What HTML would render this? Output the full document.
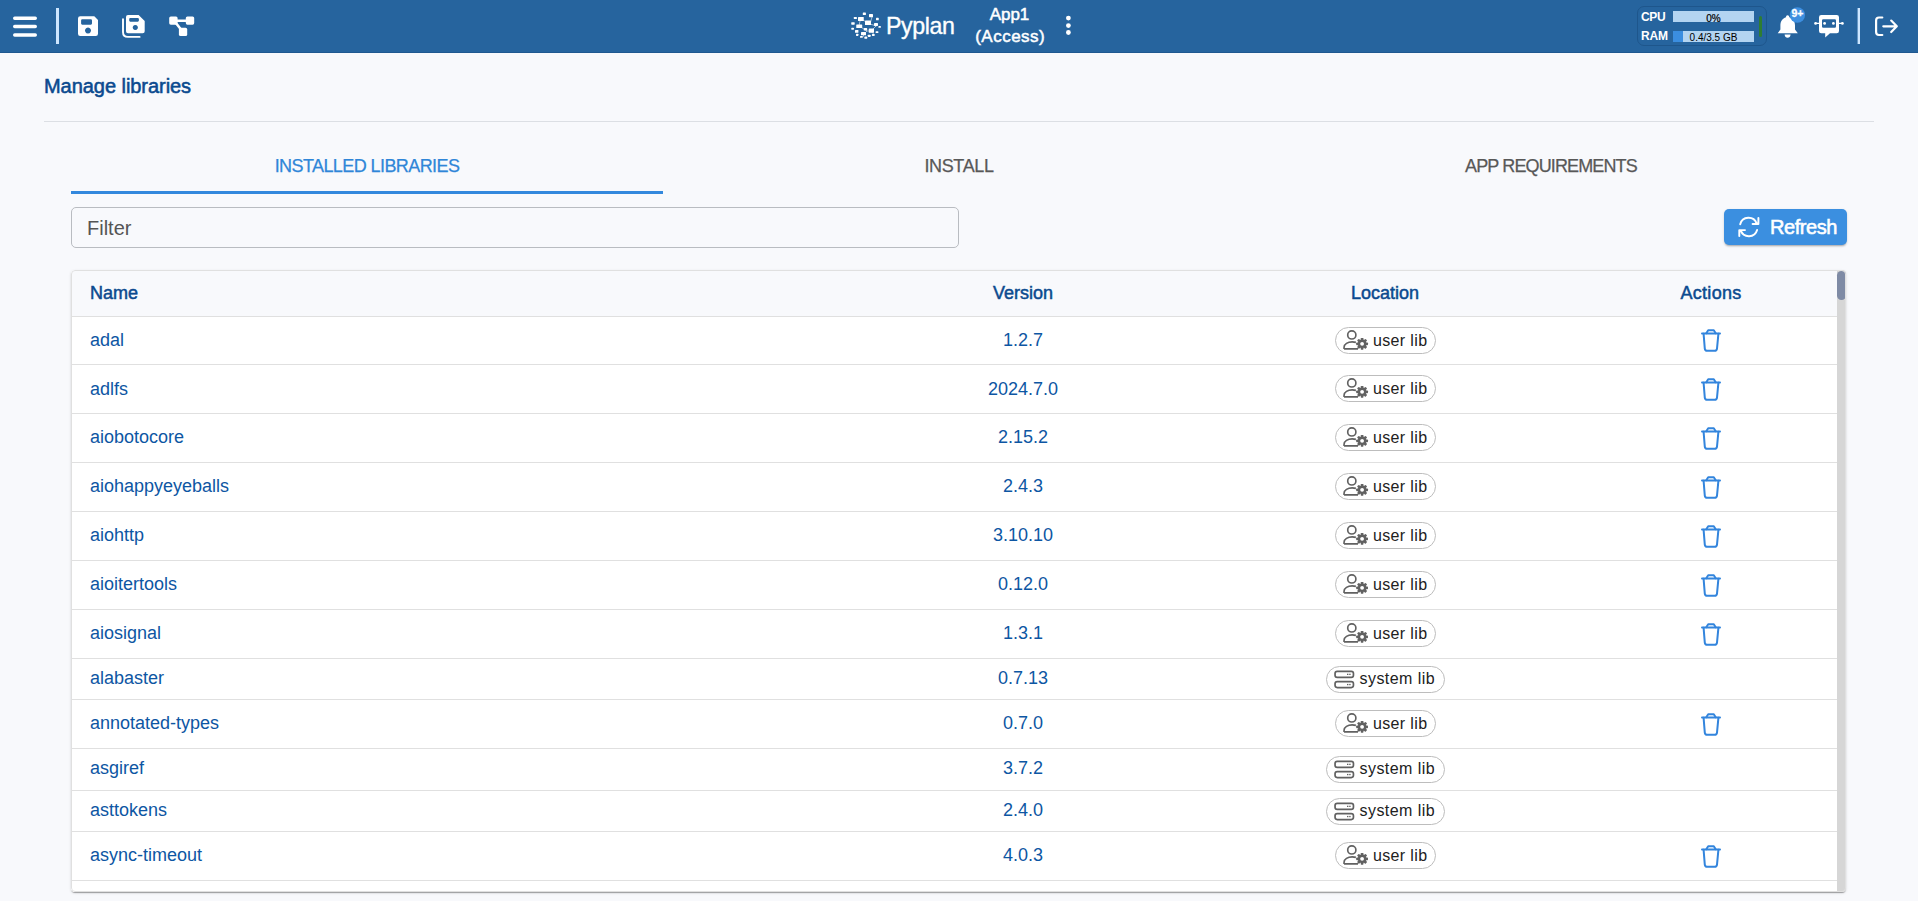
<!DOCTYPE html>
<html><head><meta charset="utf-8"><title>Pyplan - Manage libraries</title>
<style>
*{box-sizing:border-box;margin:0;padding:0}
html,body{width:1918px;height:901px;overflow:hidden;background:#f8f9fc;font-family:"Liberation Sans",sans-serif;position:relative}
.abs{position:absolute}
#hdr{position:absolute;left:0;top:0;width:1918px;height:53px;background:#26649e;border-bottom:1px solid #1f5890}
.wt{color:#fff}
.title{position:absolute;left:44px;top:74px;font-size:20px;font-weight:normal;-webkit-text-stroke:0.55px #0b4a8f;color:#0b4a8f;letter-spacing:-0.05px;line-height:24px;white-space:nowrap}
.divider{position:absolute;left:44px;top:121px;width:1830px;height:1px;background:#dcdfe4}
.tab{position:absolute;top:154px;height:24px;line-height:24px;font-size:18px;-webkit-text-stroke:0.25px currentColor;text-align:center;white-space:nowrap;color:#585858}
.tab.act{color:#2f86d8}
.ink{position:absolute;left:71px;top:191px;width:592px;height:3px;background:#3388dd}
.filter{position:absolute;left:71px;top:207px;width:888px;height:41px;border:1px solid #b9bcc1;border-radius:5px;background:#f8f9fc}
.filter span{position:absolute;left:15px;top:8px;font-size:20px;line-height:24px;color:#555}
.btn{position:absolute;left:1724px;top:209px;width:123px;height:36px;background:#3b8fe0;border-radius:5px;box-shadow:0 2px 2px -1px rgba(0,0,0,.25),0 1px 3px rgba(0,0,0,.12)}
.btn .bt{position:absolute;left:46px;top:6px;font-size:20px;font-weight:normal;-webkit-text-stroke:0.55px #fff;line-height:24px;color:#fff;letter-spacing:-0.45px}
.paper{position:absolute;left:71px;top:270px;width:1775px;height:622px;background:#fff;border-radius:4px;overflow:hidden;box-shadow:0 2px 1px -1px rgba(0,0,0,.2),0 1px 1px 0 rgba(0,0,0,.14),0 1px 3px 0 rgba(0,0,0,.12)}
.thead{position:absolute;left:0;top:0;width:1766px;height:47px;background:#f8f9fc;border-bottom:1px solid #e0e0e0}
.th{position:absolute;top:0;height:46px;line-height:46px;font-size:18px;font-weight:normal;-webkit-text-stroke:0.5px #0b4a8f;color:#0b4a8f;white-space:nowrap}
.row{position:absolute;left:0;width:1766px;background:#fff;border-bottom:1px solid #e0e0e0;box-sizing:content-box}
.nm{position:absolute;left:19px;top:0;font-size:18px;color:#0d56a3;white-space:nowrap}
.ver{position:absolute;left:852px;width:200px;top:0;text-align:center;font-size:18px;color:#0d56a3;white-space:nowrap}
.chip{position:absolute;height:27px;border:1px solid #bdbdbd;border-radius:14px;background:#fff;line-height:24px;white-space:nowrap}
.chip .ic{position:absolute;left:7px;top:1.2px}
.chip.sys .ic{left:7px;top:3.2px}
.ct{position:absolute;left:37px;top:2px;font-size:16px;color:#212121;line-height:22px;letter-spacing:0.35px}
.chip.sys .ct{left:32.5px;top:1.3px;letter-spacing:0.45px}
.trash{position:absolute;left:1629px;width:22px;height:24px;line-height:0}
.sb{position:absolute;left:1766px;top:0;width:9px;height:622px;background:#d6d6d6}
.pb{position:absolute;left:0;top:0;right:0;bottom:0;border:1px solid #e0e0e0;border-radius:4px}
.thumb{position:absolute;left:0;top:1px;width:9px;height:29px;border-radius:5px;background:#7f8ba5}
</style></head><body>
<div id="hdr">
  <svg class="abs" style="left:0;top:0" width="220" height="53" viewBox="0 0 220 53">
    <g stroke="#fff" stroke-width="3.4" stroke-linecap="round"><path d="M14.7 18.2H35.3M14.7 26.5H35.3M14.7 35H35.3"/></g>
    <rect x="56" y="8" width="3" height="36" fill="#cde6ff"/>
    <path fill="#fff" fill-rule="evenodd" d="M80 16.3H94.3L98 20V33.8Q98 36 95.8 36H80.2Q78 36 78 33.8V18.5Q78 16.3 80.2 16.3Z M82.2 19.3H90.9Q92 19.3 92 20.4V23.6Q92 24.7 90.9 24.7H82.2Q81.1 24.7 81.1 23.6V20.4Q81.1 19.3 82.2 19.3Z M88 27.5A3 3 0 1 0 88.001 27.5Z"/>
    <path fill="#fff" fill-rule="evenodd" d="M128 15H138.6L144.7 21V31.3Q144.7 33.3 142.7 33.3H128Q126 33.3 126 31.3V17Q126 15 128 15Z M130.3 18H137.8Q138.9 18 138.9 19.1V20.6Q138.9 21.7 137.8 21.7H130.3Q129.2 21.7 129.2 20.6V19.1Q129.2 18 130.3 18Z M135.3 24.9A2.6 2.6 0 1 0 135.301 24.9Z"/>
    <path fill="none" stroke="#fff" stroke-width="1.9" stroke-linecap="round" d="M123 19.2V32Q123 36.9 127.9 36.9H139.6"/>
    <g fill="#fff"><rect x="169.2" y="16.4" width="8.4" height="8.3" rx="1.6"/><rect x="185.8" y="16.4" width="8.4" height="8.3" rx="1.6"/><rect x="178.9" y="27.8" width="8.3" height="8.3" rx="1.6"/></g>
    <g stroke="#fff" stroke-width="2.6" fill="none"><path d="M176 20.8H187M175.5 22.5L181 29.5"/></g>
  </svg>
  <svg class="abs" style="left:850px;top:11px" width="32" height="29" viewBox="0 0 32 29"><g fill="#fff"><rect x="12.80" y="1.50" width="3.10" height="2.50" rx="0.6"/><rect x="19.00" y="3.00" width="4.00" height="3.20" rx="0.6"/><rect x="3.80" y="5.90" width="3.10" height="2.10" rx="0.6"/><rect x="8.00" y="5.90" width="5.75" height="4.10" rx="0.6"/><rect x="26.00" y="6.80" width="2.75" height="2.50" rx="0.6"/><rect x="15.00" y="9.60" width="6.00" height="4.40" rx="0.6"/><rect x="1.25" y="11.20" width="3.45" height="2.50" rx="0.6"/><rect x="24.00" y="12.10" width="4.00" height="2.80" rx="0.6"/><rect x="6.25" y="13.40" width="5.95" height="3.70" rx="0.6"/><rect x="28.40" y="14.90" width="2.50" height="1.90" rx="0.6"/><rect x="1.25" y="16.80" width="2.75" height="1.90" rx="0.6"/><rect x="13.75" y="17.10" width="3.45" height="2.50" rx="0.6"/><rect x="18.75" y="17.40" width="5.25" height="4.40" rx="0.6"/><rect x="5.00" y="19.00" width="3.40" height="2.80" rx="0.6"/><rect x="25.60" y="20.25" width="2.80" height="1.85" rx="0.6"/><rect x="11.00" y="20.90" width="5.00" height="3.40" rx="0.6"/><rect x="6.00" y="22.75" width="2.40" height="2.15" rx="0.6"/><rect x="17.80" y="23.70" width="2.80" height="2.20" rx="0.6"/><rect x="21.90" y="23.00" width="2.80" height="1.90" rx="0.6"/><rect x="10.00" y="24.90" width="2.80" height="1.90" rx="0.6"/><rect x="14.40" y="25.60" width="2.80" height="2.15" rx="0.6"/></g><path d="M11 8 L20 13 M22 6 L20 13 L26.5 15 M10 10 L9 15 M9 15 L17 20 L21 20 M17 20 L14 23 L13 26 M21 20 L26 15 M21 20 L24 23.5" stroke="#fff" stroke-width="0.7" fill="none" opacity="0.8"/></svg>
  <div class="abs wt" style="left:886px;top:12px;font-size:23.2px;line-height:28px;letter-spacing:-0.4px;-webkit-text-stroke:0.35px #fff">Pyplan</div>
  <div class="abs wt" style="left:966px;top:3.8px;width:88px;text-align:center;font-size:17px;line-height:22px;font-weight:normal;-webkit-text-stroke:0.5px #fff"><span style="letter-spacing:-0.1px;position:relative;left:-0.5px">App1</span><br><span style="letter-spacing:0.5px;position:relative;left:0.2px">(Access)</span></div>
  <svg class="abs" style="left:1060px;top:12px" width="16" height="28" viewBox="0 0 16 28"><g fill="#fff"><circle cx="8.4" cy="6.1" r="2.4"/><circle cx="8.4" cy="13.6" r="2.4"/><circle cx="8.4" cy="20.5" r="2.4"/></g></svg>
  <div class="abs" style="left:1637px;top:6px;width:130px;height:40px;border:1px solid #1e568c;border-radius:7px"></div>
  <div class="abs wt" style="left:1641px;top:10px;font-size:12px;line-height:14px;font-weight:bold;letter-spacing:-0.3px">CPU</div>
  <div class="abs wt" style="left:1641px;top:29.3px;font-size:12px;line-height:14px;font-weight:bold;letter-spacing:-0.15px">RAM</div>
  <div class="abs" style="left:1673px;top:11px;width:81px;height:11px;background:#b3d4f1;font-size:10px;line-height:15px;text-align:center;color:#000;-webkit-text-stroke:0.2px #000">0%</div>
  <div class="abs" style="left:1673px;top:31px;width:81px;height:11px;background:#b3d4f1"></div>
  <div class="abs" style="left:1673px;top:31px;width:10px;height:11px;background:#3b8ee0"></div>
  <div class="abs" style="left:1673px;top:31px;width:81px;height:11px;font-size:10px;line-height:13px;text-align:center;color:#000">0.4/3.5 GB</div>
  <div class="abs" style="left:1759px;top:16px;width:3px;height:20.5px;border-radius:1.5px;background:#2e7d32"></div>
  <svg class="abs" style="left:1770px;top:0" width="148" height="53" viewBox="1770 0 148 53">
    <path fill="#fff" d="M1787.5 15.3C1788.6 15.3 1789.3 16.2 1789.3 17.2C1793 18.2 1795 21.4 1795 25.3V29.6L1797.8 33.2H1777.7L1780.4 29.6V25.3C1780.4 21.4 1782.5 18.2 1786 17.2C1786 16.2 1786.6 15.3 1787.5 15.3Z M1784.6 34.6H1790.6Q1790.2 37.8 1787.6 37.8Q1785 37.8 1784.6 34.6Z"/>
    <circle cx="1797.4" cy="15" r="7.7" fill="#3d8fe0"/>
    
    <path fill="#fff" fill-rule="evenodd" d="M1821.3 15H1836.7Q1839 15 1839 17.3V30.9Q1839 33.2 1836.7 33.2H1830L1825.2 37.6V33.2H1821.3Q1819 33.2 1819 30.9V17.3Q1819 15 1821.3 15Z M1823.2 19.3H1834.8Q1836 19.3 1836 20.5V26.6Q1836 27.8 1834.8 27.8H1823.2Q1822 27.8 1822 26.6V20.5Q1822 19.3 1823.2 19.3Z"/>
    <g fill="#fff"><circle cx="1824.6" cy="23.4" r="1.4"/><circle cx="1833.4" cy="23.4" r="1.4"/></g>
    <g stroke="#fff" stroke-width="1.4"><path d="M1815.3 23.4H1819M1839 23.4H1842.7"/></g>
    <g fill="#fff"><circle cx="1815.6" cy="23.4" r="1.4"/><circle cx="1842.4" cy="23.4" r="1.4"/></g>
    <rect x="1857.6" y="8" width="2.4" height="36" fill="#cde6ff"/>
    <path fill="none" stroke="#fff" stroke-width="2.2" stroke-linecap="round" stroke-linejoin="round" d="M1882.3 17.5H1879Q1876.1 17.5 1876.1 20.4V32Q1876.1 35 1879 35H1882.3 M1883.3 26.3H1896.4 M1891.2 20.6L1896.8 26.3L1891.2 32"/>
  </svg>
  <div class="abs wt" style="left:1786.3px;top:6.8px;width:22px;text-align:center;font-size:10.5px;line-height:12px;font-weight:bold;letter-spacing:-0.2px;-webkit-text-stroke:0.3px #fff">9+</div>
</div>

<div class="title">Manage libraries</div>
<div class="divider"></div>
<div class="tab act" style="left:71px;width:592px;letter-spacing:-0.58px">INSTALLED LIBRARIES</div>
<div class="tab" style="left:663px;width:592px;letter-spacing:-0.35px">INSTALL</div>
<div class="tab" style="left:1255px;width:592px;letter-spacing:-0.87px">APP REQUIREMENTS</div>
<div class="ink"></div>
<div class="filter"><span>Filter</span></div>
<div class="btn">
  <svg class="abs" style="left:13.2px;top:7.3px" width="24" height="22" viewBox="0 0 24 22"><g fill="none" stroke="#fff" stroke-width="1.95" stroke-linecap="round" stroke-linejoin="round"><path d="M3.2 8.2A8.6 8.6 0 0 1 19.6 7.4M21.4 2V7.9H15.6"/><path d="M20.1 14A8.6 8.6 0 0 1 3.8 14.7M2.3 20V14.1H8"/></g></svg>
  <div class="bt">Refresh</div>
</div>

<div class="paper">
  <div class="thead">
    <div class="th" style="left:19px">Name</div>
    <div class="th" style="left:852px;width:200px;text-align:center;letter-spacing:0px">Version</div>
    <div class="th" style="left:1214px;width:200px;text-align:center;letter-spacing:0px">Location</div>
    <div class="th" style="left:1540px;width:200px;text-align:center;letter-spacing:0.3px">Actions</div>
  </div>
  <div style="position:absolute;left:0;top:-270px;width:1766px;height:901px">
<div class="row" style="top:317px;height:47px;line-height:47px"><div class="nm">adal</div><div class="ver">1.2.7</div><div class="chip" style="left:1264px;width:101px;top:10px"><svg class="ic" width="26" height="22" viewBox="0 0 26 22"><g fill="none" stroke="#616161" stroke-width="1.65"><circle cx="8.8" cy="5.9" r="4.1"/><path d="M1.05 19.9 V18.3 C1.05 15.1 4.8 12.9 9.2 12.9 C10.6 12.9 11.9 13.1 12.9 13.4 M1.05 19.9 H15"/></g><g transform="translate(19.1 14.8)" fill="#616161"><circle r="4.3"/><rect x="-1.35" y="-5.9" width="2.7" height="11.8" rx="0.7"/><rect x="-1.35" y="-5.9" width="2.7" height="11.8" rx="0.7" transform="rotate(45)"/><rect x="-1.35" y="-5.9" width="2.7" height="11.8" rx="0.7" transform="rotate(90)"/><rect x="-1.35" y="-5.9" width="2.7" height="11.8" rx="0.7" transform="rotate(135)"/><circle r="1.9" fill="#fff"/></g></svg><span class="ct">user lib</span></div><div class="trash" style="top:11.00px"><svg width="22" height="24" viewBox="0 0 22 24"><g fill="none" stroke="#3385dd" stroke-width="2" stroke-linecap="round" stroke-linejoin="round"><path d="M2 5.6 H20"/><path d="M3.6 5.8 L4.8 20.6 Q5 22.8 7.2 22.8 H14.6 Q16.8 22.8 17 20.6 L18.4 5.8"/><path d="M6.3 5.2 L8.2 2.2 H13.8 L15.7 5.2"/></g></svg></div></div>
<div class="row" style="top:365px;height:48px;line-height:48px"><div class="nm">adlfs</div><div class="ver">2024.7.0</div><div class="chip" style="left:1264px;width:101px;top:10px"><svg class="ic" width="26" height="22" viewBox="0 0 26 22"><g fill="none" stroke="#616161" stroke-width="1.65"><circle cx="8.8" cy="5.9" r="4.1"/><path d="M1.05 19.9 V18.3 C1.05 15.1 4.8 12.9 9.2 12.9 C10.6 12.9 11.9 13.1 12.9 13.4 M1.05 19.9 H15"/></g><g transform="translate(19.1 14.8)" fill="#616161"><circle r="4.3"/><rect x="-1.35" y="-5.9" width="2.7" height="11.8" rx="0.7"/><rect x="-1.35" y="-5.9" width="2.7" height="11.8" rx="0.7" transform="rotate(45)"/><rect x="-1.35" y="-5.9" width="2.7" height="11.8" rx="0.7" transform="rotate(90)"/><rect x="-1.35" y="-5.9" width="2.7" height="11.8" rx="0.7" transform="rotate(135)"/><circle r="1.9" fill="#fff"/></g></svg><span class="ct">user lib</span></div><div class="trash" style="top:11.50px"><svg width="22" height="24" viewBox="0 0 22 24"><g fill="none" stroke="#3385dd" stroke-width="2" stroke-linecap="round" stroke-linejoin="round"><path d="M2 5.6 H20"/><path d="M3.6 5.8 L4.8 20.6 Q5 22.8 7.2 22.8 H14.6 Q16.8 22.8 17 20.6 L18.4 5.8"/><path d="M6.3 5.2 L8.2 2.2 H13.8 L15.7 5.2"/></g></svg></div></div>
<div class="row" style="top:414px;height:48px;line-height:48px"><div class="nm" style="top:-1px">aiobotocore</div><div class="ver" style="top:-1px">2.15.2</div><div class="chip" style="left:1264px;width:101px;top:10px"><svg class="ic" width="26" height="22" viewBox="0 0 26 22"><g fill="none" stroke="#616161" stroke-width="1.65"><circle cx="8.8" cy="5.9" r="4.1"/><path d="M1.05 19.9 V18.3 C1.05 15.1 4.8 12.9 9.2 12.9 C10.6 12.9 11.9 13.1 12.9 13.4 M1.05 19.9 H15"/></g><g transform="translate(19.1 14.8)" fill="#616161"><circle r="4.3"/><rect x="-1.35" y="-5.9" width="2.7" height="11.8" rx="0.7"/><rect x="-1.35" y="-5.9" width="2.7" height="11.8" rx="0.7" transform="rotate(45)"/><rect x="-1.35" y="-5.9" width="2.7" height="11.8" rx="0.7" transform="rotate(90)"/><rect x="-1.35" y="-5.9" width="2.7" height="11.8" rx="0.7" transform="rotate(135)"/><circle r="1.9" fill="#fff"/></g></svg><span class="ct">user lib</span></div><div class="trash" style="top:11.50px"><svg width="22" height="24" viewBox="0 0 22 24"><g fill="none" stroke="#3385dd" stroke-width="2" stroke-linecap="round" stroke-linejoin="round"><path d="M2 5.6 H20"/><path d="M3.6 5.8 L4.8 20.6 Q5 22.8 7.2 22.8 H14.6 Q16.8 22.8 17 20.6 L18.4 5.8"/><path d="M6.3 5.2 L8.2 2.2 H13.8 L15.7 5.2"/></g></svg></div></div>
<div class="row" style="top:463px;height:48px;line-height:48px"><div class="nm" style="top:-1px">aiohappyeyeballs</div><div class="ver" style="top:-1px">2.4.3</div><div class="chip" style="left:1264px;width:101px;top:10px"><svg class="ic" width="26" height="22" viewBox="0 0 26 22"><g fill="none" stroke="#616161" stroke-width="1.65"><circle cx="8.8" cy="5.9" r="4.1"/><path d="M1.05 19.9 V18.3 C1.05 15.1 4.8 12.9 9.2 12.9 C10.6 12.9 11.9 13.1 12.9 13.4 M1.05 19.9 H15"/></g><g transform="translate(19.1 14.8)" fill="#616161"><circle r="4.3"/><rect x="-1.35" y="-5.9" width="2.7" height="11.8" rx="0.7"/><rect x="-1.35" y="-5.9" width="2.7" height="11.8" rx="0.7" transform="rotate(45)"/><rect x="-1.35" y="-5.9" width="2.7" height="11.8" rx="0.7" transform="rotate(90)"/><rect x="-1.35" y="-5.9" width="2.7" height="11.8" rx="0.7" transform="rotate(135)"/><circle r="1.9" fill="#fff"/></g></svg><span class="ct">user lib</span></div><div class="trash" style="top:11.50px"><svg width="22" height="24" viewBox="0 0 22 24"><g fill="none" stroke="#3385dd" stroke-width="2" stroke-linecap="round" stroke-linejoin="round"><path d="M2 5.6 H20"/><path d="M3.6 5.8 L4.8 20.6 Q5 22.8 7.2 22.8 H14.6 Q16.8 22.8 17 20.6 L18.4 5.8"/><path d="M6.3 5.2 L8.2 2.2 H13.8 L15.7 5.2"/></g></svg></div></div>
<div class="row" style="top:512px;height:48px;line-height:48px"><div class="nm" style="top:-1px">aiohttp</div><div class="ver" style="top:-1px">3.10.10</div><div class="chip" style="left:1264px;width:101px;top:10px"><svg class="ic" width="26" height="22" viewBox="0 0 26 22"><g fill="none" stroke="#616161" stroke-width="1.65"><circle cx="8.8" cy="5.9" r="4.1"/><path d="M1.05 19.9 V18.3 C1.05 15.1 4.8 12.9 9.2 12.9 C10.6 12.9 11.9 13.1 12.9 13.4 M1.05 19.9 H15"/></g><g transform="translate(19.1 14.8)" fill="#616161"><circle r="4.3"/><rect x="-1.35" y="-5.9" width="2.7" height="11.8" rx="0.7"/><rect x="-1.35" y="-5.9" width="2.7" height="11.8" rx="0.7" transform="rotate(45)"/><rect x="-1.35" y="-5.9" width="2.7" height="11.8" rx="0.7" transform="rotate(90)"/><rect x="-1.35" y="-5.9" width="2.7" height="11.8" rx="0.7" transform="rotate(135)"/><circle r="1.9" fill="#fff"/></g></svg><span class="ct">user lib</span></div><div class="trash" style="top:11.50px"><svg width="22" height="24" viewBox="0 0 22 24"><g fill="none" stroke="#3385dd" stroke-width="2" stroke-linecap="round" stroke-linejoin="round"><path d="M2 5.6 H20"/><path d="M3.6 5.8 L4.8 20.6 Q5 22.8 7.2 22.8 H14.6 Q16.8 22.8 17 20.6 L18.4 5.8"/><path d="M6.3 5.2 L8.2 2.2 H13.8 L15.7 5.2"/></g></svg></div></div>
<div class="row" style="top:561px;height:48px;line-height:48px"><div class="nm" style="top:-1px">aioitertools</div><div class="ver" style="top:-1px">0.12.0</div><div class="chip" style="left:1264px;width:101px;top:10px"><svg class="ic" width="26" height="22" viewBox="0 0 26 22"><g fill="none" stroke="#616161" stroke-width="1.65"><circle cx="8.8" cy="5.9" r="4.1"/><path d="M1.05 19.9 V18.3 C1.05 15.1 4.8 12.9 9.2 12.9 C10.6 12.9 11.9 13.1 12.9 13.4 M1.05 19.9 H15"/></g><g transform="translate(19.1 14.8)" fill="#616161"><circle r="4.3"/><rect x="-1.35" y="-5.9" width="2.7" height="11.8" rx="0.7"/><rect x="-1.35" y="-5.9" width="2.7" height="11.8" rx="0.7" transform="rotate(45)"/><rect x="-1.35" y="-5.9" width="2.7" height="11.8" rx="0.7" transform="rotate(90)"/><rect x="-1.35" y="-5.9" width="2.7" height="11.8" rx="0.7" transform="rotate(135)"/><circle r="1.9" fill="#fff"/></g></svg><span class="ct">user lib</span></div><div class="trash" style="top:11.50px"><svg width="22" height="24" viewBox="0 0 22 24"><g fill="none" stroke="#3385dd" stroke-width="2" stroke-linecap="round" stroke-linejoin="round"><path d="M2 5.6 H20"/><path d="M3.6 5.8 L4.8 20.6 Q5 22.8 7.2 22.8 H14.6 Q16.8 22.8 17 20.6 L18.4 5.8"/><path d="M6.3 5.2 L8.2 2.2 H13.8 L15.7 5.2"/></g></svg></div></div>
<div class="row" style="top:610px;height:48px;line-height:48px"><div class="nm" style="top:-1px">aiosignal</div><div class="ver" style="top:-1px">1.3.1</div><div class="chip" style="left:1264px;width:101px;top:10px"><svg class="ic" width="26" height="22" viewBox="0 0 26 22"><g fill="none" stroke="#616161" stroke-width="1.65"><circle cx="8.8" cy="5.9" r="4.1"/><path d="M1.05 19.9 V18.3 C1.05 15.1 4.8 12.9 9.2 12.9 C10.6 12.9 11.9 13.1 12.9 13.4 M1.05 19.9 H15"/></g><g transform="translate(19.1 14.8)" fill="#616161"><circle r="4.3"/><rect x="-1.35" y="-5.9" width="2.7" height="11.8" rx="0.7"/><rect x="-1.35" y="-5.9" width="2.7" height="11.8" rx="0.7" transform="rotate(45)"/><rect x="-1.35" y="-5.9" width="2.7" height="11.8" rx="0.7" transform="rotate(90)"/><rect x="-1.35" y="-5.9" width="2.7" height="11.8" rx="0.7" transform="rotate(135)"/><circle r="1.9" fill="#fff"/></g></svg><span class="ct">user lib</span></div><div class="trash" style="top:11.50px"><svg width="22" height="24" viewBox="0 0 22 24"><g fill="none" stroke="#3385dd" stroke-width="2" stroke-linecap="round" stroke-linejoin="round"><path d="M2 5.6 H20"/><path d="M3.6 5.8 L4.8 20.6 Q5 22.8 7.2 22.8 H14.6 Q16.8 22.8 17 20.6 L18.4 5.8"/><path d="M6.3 5.2 L8.2 2.2 H13.8 L15.7 5.2"/></g></svg></div></div>
<div class="row" style="top:659px;height:40px;line-height:40px"><div class="nm" style="top:-1px">alabaster</div><div class="ver" style="top:-1px">0.7.13</div><div class="chip sys" style="left:1255px;width:119px;top:7px"><svg class="ic" width="22" height="20" viewBox="0 0 22 20"><g fill="none" stroke="#616161" stroke-width="1.7"><rect x="1.05" y="1.35" width="18.4" height="6" rx="2.2"/><rect x="1.05" y="11.55" width="18.4" height="6" rx="2.2"/></g><g fill="#616161"><rect x="13" y="3.7" width="1.4" height="1.3"/><rect x="15.2" y="3.7" width="1.4" height="1.3"/><rect x="13" y="13.9" width="1.4" height="1.3"/><rect x="15.2" y="13.9" width="1.4" height="1.3"/></g></svg><span class="ct">system lib</span></div></div>
<div class="row" style="top:700px;height:48px;line-height:48px"><div class="nm" style="top:-1px">annotated-types</div><div class="ver" style="top:-1px">0.7.0</div><div class="chip" style="left:1264px;width:101px;top:10px"><svg class="ic" width="26" height="22" viewBox="0 0 26 22"><g fill="none" stroke="#616161" stroke-width="1.65"><circle cx="8.8" cy="5.9" r="4.1"/><path d="M1.05 19.9 V18.3 C1.05 15.1 4.8 12.9 9.2 12.9 C10.6 12.9 11.9 13.1 12.9 13.4 M1.05 19.9 H15"/></g><g transform="translate(19.1 14.8)" fill="#616161"><circle r="4.3"/><rect x="-1.35" y="-5.9" width="2.7" height="11.8" rx="0.7"/><rect x="-1.35" y="-5.9" width="2.7" height="11.8" rx="0.7" transform="rotate(45)"/><rect x="-1.35" y="-5.9" width="2.7" height="11.8" rx="0.7" transform="rotate(90)"/><rect x="-1.35" y="-5.9" width="2.7" height="11.8" rx="0.7" transform="rotate(135)"/><circle r="1.9" fill="#fff"/></g></svg><span class="ct">user lib</span></div><div class="trash" style="top:11.50px"><svg width="22" height="24" viewBox="0 0 22 24"><g fill="none" stroke="#3385dd" stroke-width="2" stroke-linecap="round" stroke-linejoin="round"><path d="M2 5.6 H20"/><path d="M3.6 5.8 L4.8 20.6 Q5 22.8 7.2 22.8 H14.6 Q16.8 22.8 17 20.6 L18.4 5.8"/><path d="M6.3 5.2 L8.2 2.2 H13.8 L15.7 5.2"/></g></svg></div></div>
<div class="row" style="top:749px;height:41px;line-height:41px"><div class="nm" style="top:-1px">asgiref</div><div class="ver" style="top:-1px">3.7.2</div><div class="chip sys" style="left:1255px;width:119px;top:7px"><svg class="ic" width="22" height="20" viewBox="0 0 22 20"><g fill="none" stroke="#616161" stroke-width="1.7"><rect x="1.05" y="1.35" width="18.4" height="6" rx="2.2"/><rect x="1.05" y="11.55" width="18.4" height="6" rx="2.2"/></g><g fill="#616161"><rect x="13" y="3.7" width="1.4" height="1.3"/><rect x="15.2" y="3.7" width="1.4" height="1.3"/><rect x="13" y="13.9" width="1.4" height="1.3"/><rect x="15.2" y="13.9" width="1.4" height="1.3"/></g></svg><span class="ct">system lib</span></div></div>
<div class="row" style="top:791px;height:40px;line-height:40px"><div class="nm" style="top:-1px">asttokens</div><div class="ver" style="top:-1px">2.4.0</div><div class="chip sys" style="left:1255px;width:119px;top:7px"><svg class="ic" width="22" height="20" viewBox="0 0 22 20"><g fill="none" stroke="#616161" stroke-width="1.7"><rect x="1.05" y="1.35" width="18.4" height="6" rx="2.2"/><rect x="1.05" y="11.55" width="18.4" height="6" rx="2.2"/></g><g fill="#616161"><rect x="13" y="3.7" width="1.4" height="1.3"/><rect x="15.2" y="3.7" width="1.4" height="1.3"/><rect x="13" y="13.9" width="1.4" height="1.3"/><rect x="15.2" y="13.9" width="1.4" height="1.3"/></g></svg><span class="ct">system lib</span></div></div>
<div class="row" style="top:832px;height:48px;line-height:48px"><div class="nm" style="top:-1px">async-timeout</div><div class="ver" style="top:-1px">4.0.3</div><div class="chip" style="left:1264px;width:101px;top:10px"><svg class="ic" width="26" height="22" viewBox="0 0 26 22"><g fill="none" stroke="#616161" stroke-width="1.65"><circle cx="8.8" cy="5.9" r="4.1"/><path d="M1.05 19.9 V18.3 C1.05 15.1 4.8 12.9 9.2 12.9 C10.6 12.9 11.9 13.1 12.9 13.4 M1.05 19.9 H15"/></g><g transform="translate(19.1 14.8)" fill="#616161"><circle r="4.3"/><rect x="-1.35" y="-5.9" width="2.7" height="11.8" rx="0.7"/><rect x="-1.35" y="-5.9" width="2.7" height="11.8" rx="0.7" transform="rotate(45)"/><rect x="-1.35" y="-5.9" width="2.7" height="11.8" rx="0.7" transform="rotate(90)"/><rect x="-1.35" y="-5.9" width="2.7" height="11.8" rx="0.7" transform="rotate(135)"/><circle r="1.9" fill="#fff"/></g></svg><span class="ct">user lib</span></div><div class="trash" style="top:11.50px"><svg width="22" height="24" viewBox="0 0 22 24"><g fill="none" stroke="#3385dd" stroke-width="2" stroke-linecap="round" stroke-linejoin="round"><path d="M2 5.6 H20"/><path d="M3.6 5.8 L4.8 20.6 Q5 22.8 7.2 22.8 H14.6 Q16.8 22.8 17 20.6 L18.4 5.8"/><path d="M6.3 5.2 L8.2 2.2 H13.8 L15.7 5.2"/></g></svg></div></div>
  <div class="row" style="top:881px;height:40px"></div>
  </div>
  <div class="sb"><div class="thumb"></div></div>
  <div class="pb"></div>
</div>
</body></html>
